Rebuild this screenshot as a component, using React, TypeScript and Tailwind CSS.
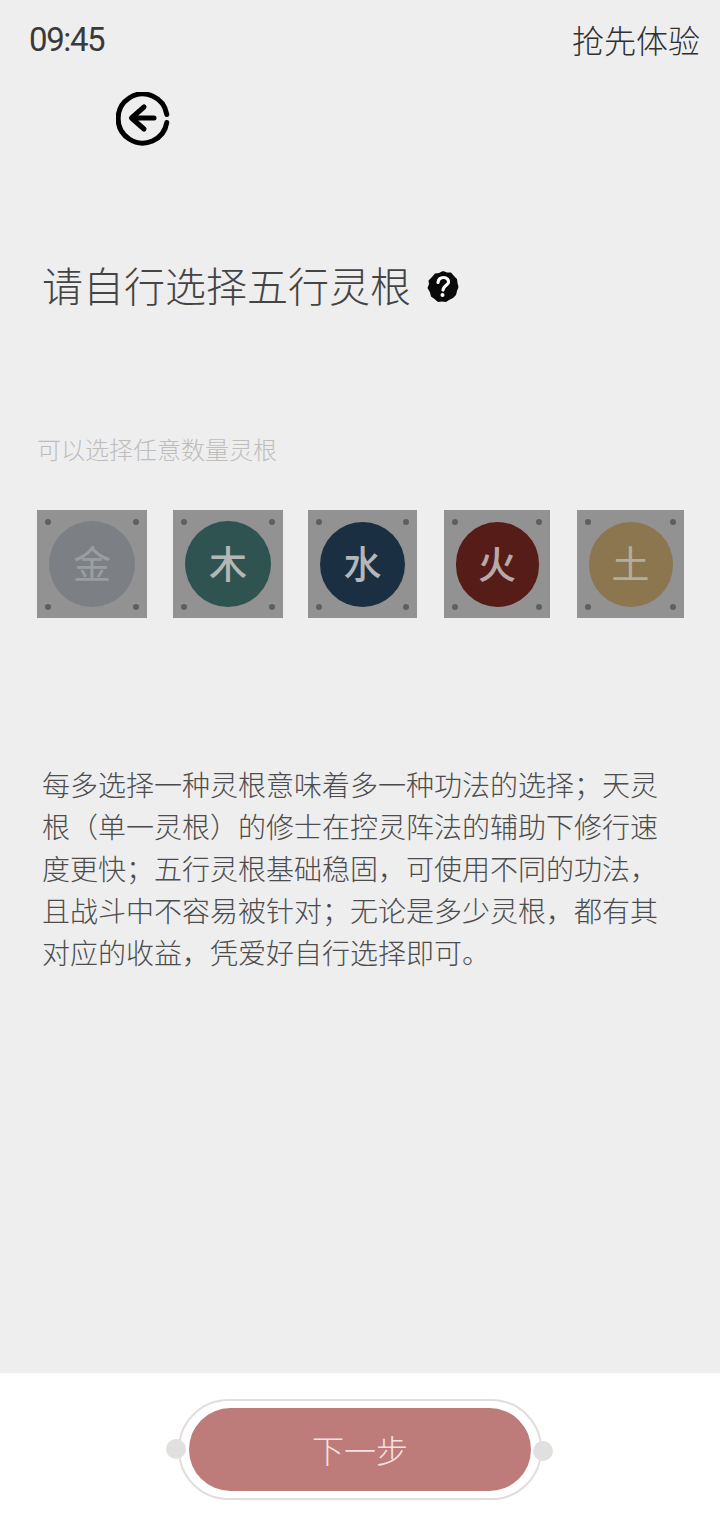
import React from "react";

const FONT = "font-['Noto_Sans_CJK_SC','Noto_Sans',sans-serif]";

const tiles = [
  { name: "金", tile: "w-[110px]", circle: "w-[86px] h-[86px] bg-[#7c8084]", text: "font-normal text-[#9a9ea1]" },
  { name: "木", tile: "w-[110px] ml-[26px]", circle: "w-[86px] h-[86px] bg-[#2f5350]", text: "font-medium text-[#b3b7b5]" },
  { name: "水", tile: "w-[109px] ml-[25px]", circle: "w-[85px] h-[85px] bg-[#1a3042]", text: "font-medium text-[#b3b7ba]" },
  { name: "火", tile: "w-[106px] ml-[27px]", circle: "w-[83px] h-[85px] bg-[#561c18]", text: "font-medium text-[#b8aaa8]" },
  { name: "土", tile: "w-[107px] ml-[27px]", circle: "w-[84px] h-[85px] bg-[#8c7650]", text: "font-normal text-[#b3ad9e]" },
];

const Screw = ({ pos }: { pos: string }) => (
  <span className={`absolute w-[6px] h-[6px] rounded-full bg-[#5f5f5f] ${pos}`}></span>
);

const BackIcon = () => (
  <svg width="54" height="54" viewBox="0 0 54 54" fill="none" stroke="#000" strokeWidth="5" strokeLinecap="round" strokeLinejoin="round">
    <path d="M50.800 22.500A24.500 24.500 0 1 0 50.800 30.500" />
    <path d="M38 26H16M28 15L15.500 26L28 37" />
  </svg>
);

const HelpIcon = () => (
  <svg width="32" height="33" viewBox="0 0 32 33">
    <path
      fill="#0a0a0a"
      d="M16 1L20 2.500L24 2.500L27 6L30 9L30.500 13L31.500 17L30 21L29 25L26 28L22 30L19 32L15 31.500L11 32L7.500 29L4 26.500L3 22.500L.5 18L2 14L1.500 10.500L5 7L8 3.500L12 3Z"
    />
    <path
      fill="none"
      stroke="#fff"
      strokeWidth="3.200"
      strokeLinecap="round"
      d="M11 12.500C11.500 9 14 7.500 16.500 7.500C20 7.500 22 10 21.500 12.500C21 15 17.500 15.500 16.500 18.500L16 20"
    />
    <circle cx="15.500" cy="25" r="2" fill="#fff" />
  </svg>
);

const App: React.FC = () => {
  return (
    <div lang="zh-CN" className={`w-[720px] h-[1540px] flex flex-col bg-[#eeeeee] overflow-hidden ${FONT}`}>
      <main className="flex-1">
        {/* status bar */}
        <div className="h-[80px] pl-[29px] pr-[20px] flex items-center justify-between">
          <span className="font-['Roboto',sans-serif] text-[33px] tracking-[-1.4px] text-[#3a3a3a]">09:45</span>
          <span className="text-[32px] font-light text-[#303030] mb-[2px]">抢先体验</span>
        </div>

        <div className="mt-[12px] ml-[116px]">
          <BackIcon />
        </div>

        {/* title */}
        <div className="mt-[108px] ml-[42px] h-[60px] flex items-center">
          <h1 className="text-[41px] font-light leading-[60px] text-[#444444]">请自行选择五行灵根</h1>
          <span className="ml-[16px] mt-[4px]">
            <HelpIcon />
          </span>
        </div>

        <p className="mt-[117px] ml-[37px] text-[24px] leading-[36px] font-light text-[#bdbdbd]">可以选择任意数量灵根</p>

        {/* root tiles */}
        <div className="mt-[43px] pl-[37px] flex">
          {tiles.map((t) => (
            <div key={t.name} className={`relative h-[108px] bg-[#929292] flex items-center justify-center ${t.tile}`}>
              <Screw pos="left-[8px] top-[9px]" />
              <Screw pos="right-[8px] top-[9px]" />
              <Screw pos="left-[8px] bottom-[8px]" />
              <Screw pos="right-[8px] bottom-[8px]" />
              <div className={`rounded-full pb-[5px] flex items-center justify-center ${t.circle}`}>
                <span className={`text-[38px] leading-none ${t.text}`}>{t.name}</span>
              </div>
            </div>
          ))}
        </div>

        <p className="mt-[145px] ml-[42px] w-[616px] text-[28px] leading-[42px] font-light text-[#4c4c4c]">
          每多选择一种灵根意味着多一种功法的选择；天灵根（单一灵根）的修士在控灵阵法的辅助下修行速度更快；五行灵根基础稳固，可使用不同的功法，且战斗中不容易被针对；无论是多少灵根，都有其对应的收益，凭爱好自行选择即可。
        </p>
      </main>

      {/* bottom action */}
      <footer className="h-[167px] bg-white flex justify-center pt-[26px]">
        <div className="relative w-[364px] h-[101px] rounded-full border-2 border-[#e2dddd] flex items-center justify-center">
          <span className="absolute left-[-14px] top-[38px] w-[20px] h-[20px] rounded-full bg-[#e0e0de]"></span>
          <span className="absolute right-[-13px] top-[40px] w-[20px] h-[20px] rounded-full bg-[#e0e0de]"></span>
          <button className="w-[342px] h-[83px] mb-[1px] rounded-full bg-[#bd7b7a] text-[32px] font-light text-[#f6e2e0]">下一步</button>
        </div>
      </footer>
    </div>
  );
};

export default App;
